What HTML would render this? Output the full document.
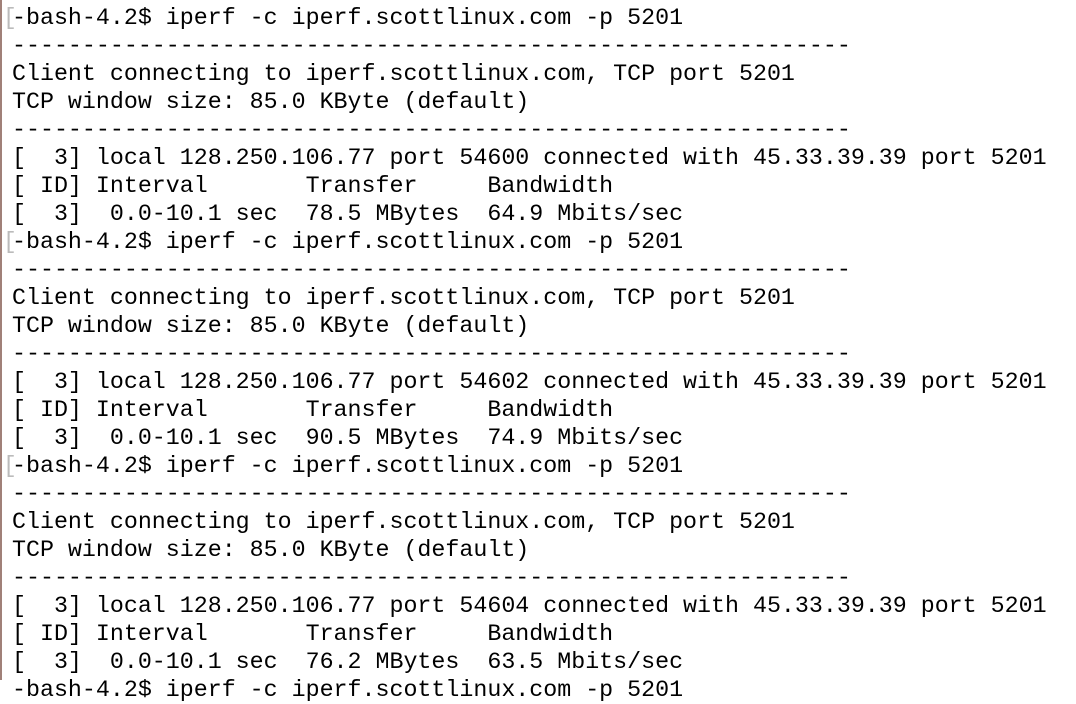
<!DOCTYPE html>
<html><head><style>
html,body{margin:0;padding:0;background:#fff;width:1076px;height:680px;overflow:hidden;}
.l{position:absolute;left:0;top:0;width:2px;height:680px;background:#a08078;}
pre{position:absolute;left:12px;top:4px;margin:0;font-family:"Liberation Mono",monospace;font-size:23.3px;line-height:28px;color:#000;}
.m{position:absolute;left:3px;color:#bbb;font-family:"Liberation Mono",monospace;font-size:23px;line-height:28px;}
</style></head><body>
<div class="l"></div>
<div class="m" style="top:4px">[</div>
<div class="m" style="top:228px">[</div>
<div class="m" style="top:452px">[</div>
<pre>-bash-4.2$ iperf -c iperf.scottlinux.com -p 5201
------------------------------------------------------------
Client connecting to iperf.scottlinux.com, TCP port 5201
TCP window size: 85.0 KByte (default)
------------------------------------------------------------
[  3] local 128.250.106.77 port 54600 connected with 45.33.39.39 port 5201
[ ID] Interval       Transfer     Bandwidth
[  3]  0.0-10.1 sec  78.5 MBytes  64.9 Mbits/sec
-bash-4.2$ iperf -c iperf.scottlinux.com -p 5201
------------------------------------------------------------
Client connecting to iperf.scottlinux.com, TCP port 5201
TCP window size: 85.0 KByte (default)
------------------------------------------------------------
[  3] local 128.250.106.77 port 54602 connected with 45.33.39.39 port 5201
[ ID] Interval       Transfer     Bandwidth
[  3]  0.0-10.1 sec  90.5 MBytes  74.9 Mbits/sec
-bash-4.2$ iperf -c iperf.scottlinux.com -p 5201
------------------------------------------------------------
Client connecting to iperf.scottlinux.com, TCP port 5201
TCP window size: 85.0 KByte (default)
------------------------------------------------------------
[  3] local 128.250.106.77 port 54604 connected with 45.33.39.39 port 5201
[ ID] Interval       Transfer     Bandwidth
[  3]  0.0-10.1 sec  76.2 MBytes  63.5 Mbits/sec
-bash-4.2$ iperf -c iperf.scottlinux.com -p 5201</pre>
</body></html>
